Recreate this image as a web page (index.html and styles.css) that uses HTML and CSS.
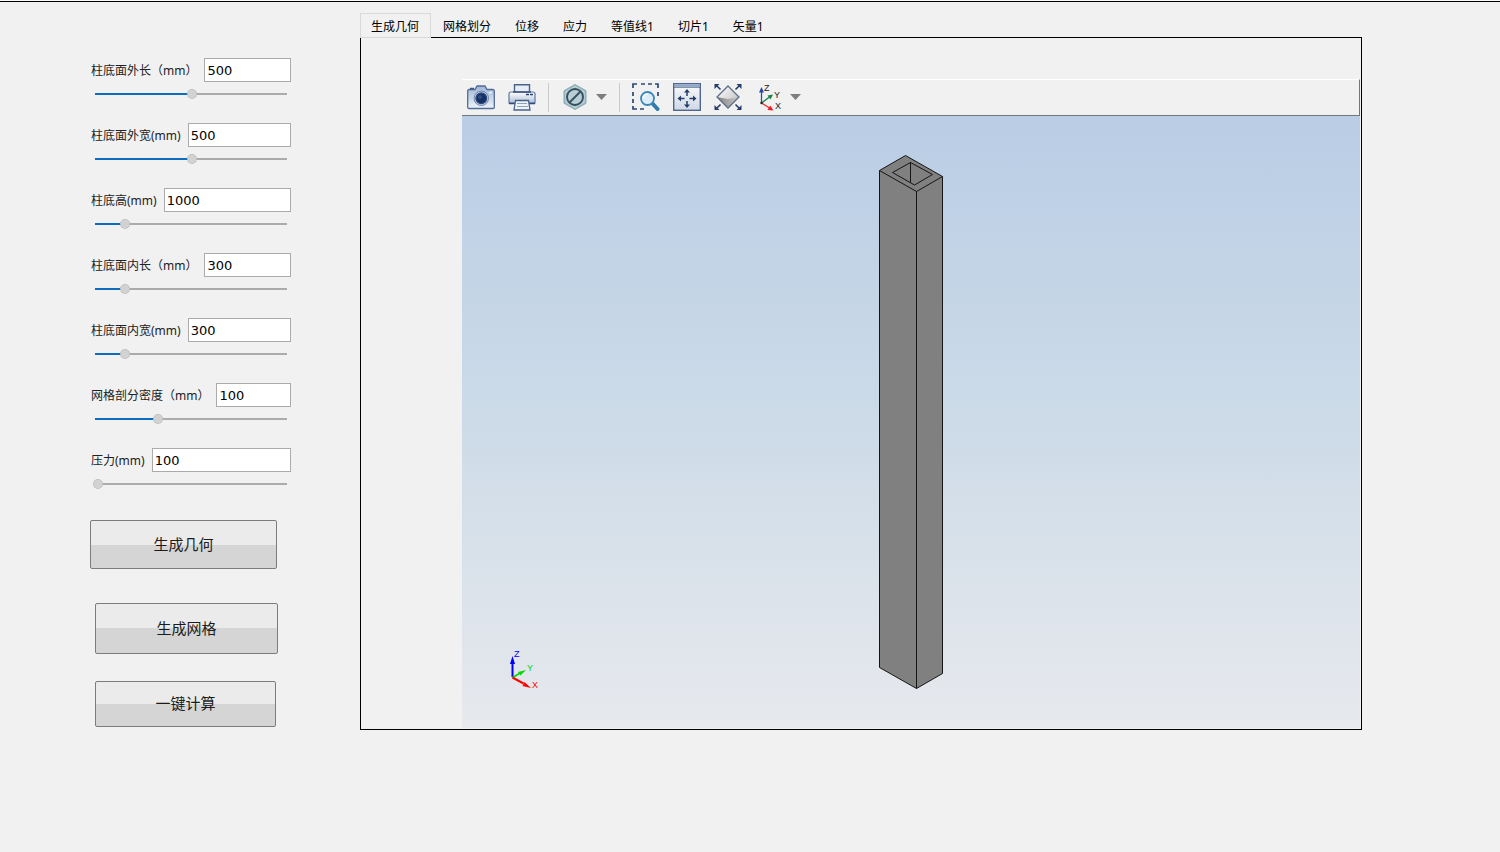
FILE: index.html
```html
<!DOCTYPE html>
<html lang="zh-CN">
<head>
<meta charset="utf-8">
<title>生成几何</title>
<link rel="stylesheet" href="styles.css">
</head>
<body>
<main class="app">
  <form class="sidebar">
    <div class="field">
      <div class="field-row"><label for="outer-length">柱底面外长（mm）</label><input class="value" id="outer-length" type="text" value="500"></div>
      <input class="slider" type="range" min="0" max="1000" value="505" aria-label="柱底面外长" style="--fill:50.5%">
    </div>
    <div class="field">
      <div class="field-row"><label for="outer-width">柱底面外宽(mm)</label><input class="value" id="outer-width" type="text" value="500"></div>
      <input class="slider" type="range" min="0" max="1000" value="505" aria-label="柱底面外宽" style="--fill:50.5%">
    </div>
    <div class="field">
      <div class="field-row"><label for="height">柱底高(mm)</label><input class="value" id="height" type="text" value="1000"></div>
      <input class="slider" type="range" min="0" max="1000" value="145" aria-label="柱底高" style="--fill:14.5%">
    </div>
    <div class="field">
      <div class="field-row"><label for="inner-length">柱底面内长（mm）</label><input class="value" id="inner-length" type="text" value="300"></div>
      <input class="slider" type="range" min="0" max="1000" value="145" aria-label="柱底面内长" style="--fill:14.5%">
    </div>
    <div class="field">
      <div class="field-row"><label for="inner-width">柱底面内宽(mm)</label><input class="value" id="inner-width" type="text" value="300"></div>
      <input class="slider" type="range" min="0" max="1000" value="145" aria-label="柱底面内宽" style="--fill:14.5%">
    </div>
    <div class="field">
      <div class="field-row"><label for="density">网格剖分密度（mm）</label><input class="value" id="density" type="text" value="100"></div>
      <input class="slider" type="range" min="0" max="1000" value="323" aria-label="网格剖分密度" style="--fill:32.3%">
    </div>
    <div class="field">
      <div class="field-row"><label for="pressure">压力(mm)</label><input class="value" id="pressure" type="text" value="100"></div>
      <input class="slider" type="range" min="0" max="1000" value="0" aria-label="压力" style="--fill:0%">
    </div>
    <div class="actions">
      <button class="action action-geometry" type="button">生成几何</button>
      <button class="action action-mesh" type="button">生成网格</button>
      <button class="action action-solve" type="button">一键计算</button>
    </div>
  </form>

  <section class="workspace">
    <div class="tabs" role="tablist">
      <button class="tab tab-active" type="button" role="tab" aria-selected="true">生成几何</button>
      <button class="tab" type="button" role="tab">网格划分</button>
      <button class="tab" type="button" role="tab">位移</button>
      <button class="tab" type="button" role="tab">应力</button>
      <button class="tab" type="button" role="tab">等值线1</button>
      <button class="tab" type="button" role="tab">切片1</button>
      <button class="tab" type="button" role="tab">矢量1</button>
    </div>
    <div class="panel" role="tabpanel">
      <div class="toolbar">
        <button class="tool" type="button" aria-label="截图">
          <svg width="28" height="28" viewBox="0 0 28 28">
            <defs><linearGradient id="cam" x1="0" y1="0" x2="0" y2="1"><stop offset="0" stop-color="#9fb5d4"/><stop offset="1" stop-color="#eef3f9"/></linearGradient></defs>
            <path d="M2 6.500h6l2-3.500h8l2 3.500h6a1.300 1.300 0 0 1 1.300 1.300v16.400a1.300 1.300 0 0 1-1.300 1.300H2a1.300 1.300 0 0 1-1.300-1.300V7.800A1.300 1.300 0 0 1 2 6.500z" fill="url(#cam)" stroke="#526b96" stroke-width="1.300"/>
            <path d="M3 5.500h4" stroke="#3f5785" stroke-width="1.500"/>
            <circle cx="14.300" cy="15.300" r="7.200" fill="#c3d2e6" stroke="#6c84aa"/>
            <circle cx="14.300" cy="15.300" r="5.400" fill="#172f61" stroke="#2f4c80" stroke-width="1.200"/>
            <circle cx="13" cy="14" r="2" fill="#304e85"/>
            <path d="M22 9.500h3" stroke="#e9f1fb" stroke-width="1.500"/>
          </svg>
        </button>
        <button class="tool" type="button" aria-label="打印">
          <svg width="28" height="28" viewBox="0 0 28 28">
            <defs><linearGradient id="prn" x1="0" y1="0" x2="0" y2="1"><stop offset="0" stop-color="#fff"/><stop offset="1" stop-color="#aebfd7"/></linearGradient></defs>
            <path d="M6.500 10V1.800h15V10" fill="#e8eef6" stroke="#4a618b" stroke-width="1.400"/>
            <path d="M1 20V11q0-2 2-2h22q2 0 2 2v9z" fill="url(#prn)" stroke="#60769d" stroke-width="1.200"/>
            <path d="M5 9h18" stroke="#344c7c" stroke-width="1.500"/>
            <path d="M18 11.500h3m1 0h3" stroke="#27406f" stroke-width="1.300"/>
            <path d="M1 20.500h6m14 0h6" stroke="#344c7c" stroke-width="1.500"/>
            <path d="M7.500 17.500h13l1.500 9.500H6z" fill="#eef3f8" stroke="#4a618b" stroke-width="1.300"/>
            <path d="M9 20.500h10M9 23.500h11" stroke="#8da2c0" stroke-width="1.200"/>
          </svg>
        </button>
        <span class="separator"></span>
        <button class="tool" type="button" aria-label="材质">
          <svg width="28" height="28" viewBox="0 0 28 28">
            <path d="M14 1.500l11 6.200v12.600l-11 6.200-11-6.200V7.700z" fill="#9dbac4" stroke="#8aa9b5" stroke-width="1"/>
            <path d="M14 3.500l9 5.200v10.600l-9 5.200-9-5.200V8.700z" fill="none" stroke="#c9dbe0" stroke-width="1"/>
            <circle cx="14" cy="14" r="8" fill="#b8ced5" stroke="#37515f" stroke-width="1.900"/>
            <path d="M8.500 19.500l11-11" stroke="#37515f" stroke-width="1.900"/>
          </svg>
          <svg width="11" height="6" viewBox="0 0 11 6"><path d="M0 0h11L5.500 6z" fill="#7e7e7e"/></svg>
        </button>
        <span class="separator"></span>
        <button class="tool" type="button" aria-label="框选缩放">
          <svg width="28" height="28" viewBox="0 0 28 28">
            <path d="M1 5V1h4M9 1h4M16 1h4M23 1h3v4M1 9v4M1 16v4M1 23v3h4M8 26h4M26 9v4" fill="none" stroke="#2f4671" stroke-width="1.700"/>
            <path d="M20.500 20.500l5 5.500" stroke="#327cab" stroke-width="4" stroke-linecap="round"/>
            <circle cx="15.500" cy="15.500" r="6.500" fill="#dcedf9" stroke="#3c87b7" stroke-width="1.800"/>
            <path d="M11.500 15a4 4 0 0 1 4-4" fill="none" stroke="#fff" stroke-width="1.600"/>
          </svg>
        </button>
        <button class="tool" type="button" aria-label="平移视图">
          <svg width="28" height="28" viewBox="0 0 28 28">
            <defs><linearGradient id="pan" x1="0" y1="0" x2="0" y2="1"><stop offset="0" stop-color="#fafbfd"/><stop offset="1" stop-color="#cfd8e5"/></linearGradient></defs>
            <rect x=".7" y=".7" width="26.600" height="26.600" fill="url(#pan)" stroke="#4f678f" stroke-width="1.400"/>
            <path d="M1 2.500h26" stroke="#8ba5c9" stroke-width="2"/>
            <path d="M1 4.200h26" stroke="#4f678f"/>
            <path d="M14 13V8.500M14 18v5M11.500 15.500h-5M16.500 15.500h5" stroke="#263d6a" stroke-width="1.500"/>
            <path d="M14 6l3 3.500h-6zM14 25l3-3.500h-6zM4.500 15.500L8 12.500v6zM23.500 15.500L20 12.500v6z" fill="#263d6a"/>
          </svg>
        </button>
        <button class="tool" type="button" aria-label="适应窗口">
          <svg width="28" height="28" viewBox="0 0 28 28">
            <defs>
              <linearGradient id="dia-top" x1="0" y1="0" x2="1" y2="1"><stop offset="0" stop-color="#fff"/><stop offset="1" stop-color="#b9b9b9"/></linearGradient>
              <linearGradient id="dia" x1="0" y1="0" x2="1" y2="0"><stop offset="0" stop-color="#858585"/><stop offset="1" stop-color="#c8c8c8"/></linearGradient>
            </defs>
            <path d="M14 3L25 14 14 25 3 14z" fill="url(#dia-top)"/>
            <path d="M3 14l11 2 11-2-11 11z" fill="url(#dia)"/>
            <path d="M14 3L25 14 14 25 3 14z" fill="none" stroke="#5d6c88" stroke-width="1.300"/>
            <path d="M6.500 6.500L3 3M21.500 6.500L25 3M6.500 21.500L3 25M21.500 21.500L25 25" stroke="#263d6a" stroke-width="1.600"/>
            <path d="M.5 1h5L.5 6zM27.500 1h-5l5 5zM.5 27h5l-5-5zM27.500 27h-5l5-5z" fill="#263d6a"/>
          </svg>
        </button>
        <button class="tool" type="button" aria-label="视图方向">
          <svg width="28" height="28" viewBox="0 0 28 28">
            <path d="M6.500 20V8" stroke="#2b4fa0" stroke-width="1.300"/><path d="M6.500 4L9 9.500H4z" fill="#2347a3"/>
            <path d="M6.500 20l8-6" stroke="#188449" stroke-width="1.300"/><path d="M18 11.500l-2.500 5-3-4z" fill="#188449"/>
            <path d="M6.500 20l8 5" stroke="#e03036" stroke-width="1.300"/><path d="M18.500 27.500l-6-.500 2.700-4.500z" fill="#ed1c24"/>
            <circle cx="6.500" cy="20" r="1.200" fill="#222"/>
            <text class="axis-text" x="9" y="8">Z</text><text class="axis-text" x="19" y="15">Y</text><text class="axis-text" x="20" y="26">X</text>
          </svg>
          <svg width="11" height="6" viewBox="0 0 11 6"><path d="M0 0h11L5.500 6z" fill="#7e7e7e"/></svg>
        </button>
      </div>
      <div class="viewport">
        <svg width="66" height="536" viewBox="878 154 66 536" role="img" aria-label="空心柱几何模型">
          <g fill="#808080" stroke="#151515" stroke-width="1" stroke-linejoin="round">
            <path d="M879.500 170.500L905.500 155.500 942.500 176.500V673.500L916.500 688.500 879.500 667.500z"/>
            <path d="M879.500 170.500L916.500 191.500 942.500 176.500M916.500 191.500V688.500" fill="none"/>
            <path d="M892.500 172.500L910.500 162.500 932.500 174.500 914.500 185z" fill="none"/>
            <path d="M910.500 162.500V183" fill="none"/>
          </g>
        </svg>
        <svg class="triad" width="34" height="42" viewBox="508 648 34 42" role="img" aria-label="坐标轴">
          <path d="M512.500 677V662" stroke="#00f" stroke-width="2"/><path d="M512.500 656l2.500 8h-5z" fill="#00f"/>
          <path d="M512.500 677.500l7-4" stroke="#00d800" stroke-width="1.500"/><path d="M526 670l-5.500 5.500-2.500-3.500z" fill="#00d800"/>
          <path d="M512.500 677.500l11 6" stroke="#f00" stroke-width="2"/><path d="M531 688l-8.500-2 2-4z" fill="#f00"/>
          <text class="axis-text axis-z" x="514" y="657">Z</text><text class="axis-text axis-y" x="527" y="671">Y</text><text class="axis-text axis-x" x="532" y="688">X</text>
        </svg>
      </div>
    </div>
  </section>
</main>
</body>
</html>
```
FILE: styles.css
```css
* { box-sizing: border-box; }

body {
  margin: 0;
  background: #f1f1f1;
  color: #000;
  font: 12px/16px "Noto Sans", "Noto Sans CJK SC", sans-serif;
}

button, input { font: inherit; color: inherit; }

.app {
  display: flex;
  gap: 69px;
  min-height: 100vh;
  padding: 13px 138px 122px 90px;
  background: linear-gradient(#fafafa 1px, #000 1px, #000 2px, #f1f1f1 2px);
}

.sidebar {
  flex: none;
  width: 201px;
  padding-top: 45px;
}

.field { height: 65px; }

.field-row {
  display: flex;
  align-items: center;
  gap: 7px;
  height: 24px;
}

.field-row label {
  flex: none;
  padding: 2px 0 0 1px;
  color: #222;
}

.value {
  flex: 1;
  min-width: 0;
  height: 24px;
  padding: 1px 2px 0;
  border: 1px solid #ababab;
  border-radius: 0;
  background: #fff;
  color: #000;
  font: 13px/20px "DejaVu Sans", sans-serif;
}

.slider {
  display: block;
  width: 196px;
  height: 24px;
  margin: 0 3px;
  appearance: none;
  background:
    linear-gradient(#0d6cbd, #0d6cbd) 2px 11px / calc(var(--fill) - 1px) 2px no-repeat,
    linear-gradient(#ababab, #ababab) 2px 11px / 192px 2px no-repeat;
}

.slider::-webkit-slider-thumb {
  appearance: none;
  width: 10px;
  height: 10px;
  border: 1px dotted #b2b2b2;
  border-radius: 50%;
  background: #d2d2d2;
}

.actions {
  display: flex;
  flex-direction: column;
  align-items: flex-start;
  padding-top: 7px;
}

.action {
  padding: 0 0 2px;
  border: 1px solid #7c7c7c;
  border-radius: 2px;
  background: linear-gradient(#ebebeb 50%, #d5d5d5 50%) border-box;
  color: #1c1c1c;
  font-size: 15px;
  line-height: 20px;
}

.action-geometry { width: 187px; height: 49px; }
.action-mesh { width: 183px; height: 51px; margin: 34px 0 27px 5px; }
.action-solve { width: 181px; height: 46px; margin-left: 5px; }

.workspace {
  display: flex;
  flex: 1;
  flex-direction: column;
  min-width: 0;
}

.tabs {
  display: flex;
  z-index: 1;
  margin-bottom: -1px;
}

.tab {
  height: 25px;
  padding: 2px 12px 0;
  border: 0;
  background: none;
  white-space: nowrap;
}

.tab-active {
  padding: 2px 11px 0 10px;
  border: 1px solid #d9d9d9;
  background: #f1f1f1;
}

.panel {
  display: flex;
  flex: 1;
  flex-direction: column;
  padding: 41px 1px 1px 101px;
  border: 1px solid #000;
}

.toolbar {
  display: flex;
  align-items: center;
  gap: 13px;
  height: 37px;
  padding: 0 5px 1px;
  border-top: 1px solid #fff;
  border-right: 1px solid #777;
  border-bottom: 1px solid #777;
}

.tool {
  display: flex;
  align-items: center;
  gap: 7px;
  padding: 0;
  border: 0;
  background: none;
}

.separator {
  width: 1px;
  height: 29px;
  margin: 0 -1px;
  background: #cacaca;
}

.viewport {
  position: relative;
  display: flex;
  flex: 1;
  align-items: center;
  justify-content: center;
  background: linear-gradient(#b9cde5, #cddbe8 50%, #e7e9ed);
}

.triad {
  position: absolute;
  bottom: 38px;
  left: 46px;
}

.axis-text { font: 9px "Liberation Sans", sans-serif; fill: #222; }
.axis-z { fill: #00f; }
.axis-y { fill: #00d800; }
.axis-x { fill: #f00; }
```
